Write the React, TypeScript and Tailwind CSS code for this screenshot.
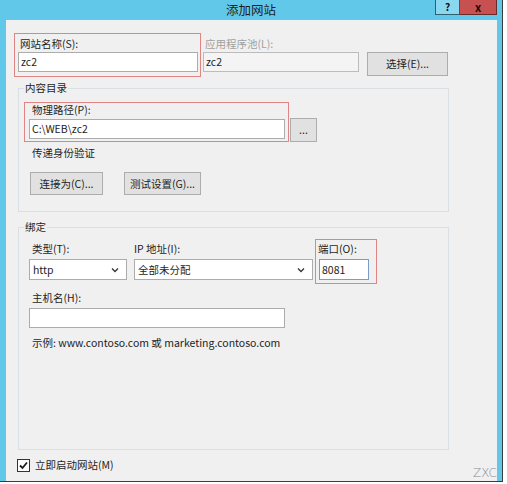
import React from "react";

const font = { fontFamily: '"Noto Sans CJK SC", "Noto Sans", sans-serif' };

function Chevron() {
  return (
    <svg width="8" height="6" viewBox="0 0 8 6" className="shrink-0">
      <polyline points="1,1.5 4,4.5 7,1.5" fill="none" stroke="#333" strokeWidth="1.3" />
    </svg>
  );
}

function Select({ value, w }: { value: string; w: string }) {
  return (
    <div
      className={`${w} mt-[3px] flex h-[21px] items-center justify-between border border-[#acacac] bg-white pl-[3px] pr-[7px]`}
    >
      <span className="leading-[14px]">{value}</span>
      <Chevron />
    </div>
  );
}

function Button({ label, w, h = "h-[23px]" }: { label: string; w: string; h?: string }) {
  return (
    <div
      className={`${w} ${h} flex items-center justify-center border border-[#adadad] bg-[#e1e1e1] leading-[14px]`}
    >
      {label}
    </div>
  );
}

export default function App() {
  return (
    <div className="h-[484px] w-[507px] overflow-hidden bg-white text-[10.5px] text-[#1e1e1e]" style={font}>
      <div className="flex h-[482px] w-[503px] flex-col border-b border-r border-[#3c3c3c] bg-[#62c8e9]">
        {/* title bar */}
        <div className="flex h-[20px] shrink-0 items-start">
          <div className="flex-1 pl-[67px] pt-[2px] text-center text-[12.5px] leading-[16px]">添加网站</div>
          <div className="flex h-[15px] w-[25px] shrink-0 items-center justify-center border-x border-b border-[#2f5f70] bg-[#8ad7f0]">
            <span className="text-[10px] font-bold leading-[10px] text-[#111]">?</span>
          </div>
          <div className="flex h-[15px] w-[37px] shrink-0 items-center justify-center border-b border-r border-[#6b2a2a] bg-[#c75050]">
            <span className="text-[11px] font-bold leading-[10px] text-[#111]">x</span>
          </div>
          <div className="w-[5px] shrink-0" />
        </div>

        {/* content */}
        <div className="relative ml-[6px] mr-[5px] flex-1 bg-[#f0f0f0]">
          {/* row 1 */}
          <div className="flex items-start pt-[13px]">
            <div className="ml-[8px] h-[44px] w-[187px] border border-[#e08585] pl-[3px] pt-[3px]">
              <div className="h-[14px] pl-[2px] leading-[14px]">网站名称(S):</div>
              <div className="mt-[1px] flex h-[20px] w-[180px] items-center border border-[#acacac] bg-white pl-[2px] leading-[14px]">
                zc2
              </div>
            </div>
            <div className="ml-[2px] pt-[4px]">
              <div className="h-[14px] pl-[2px] leading-[14px] text-[#a0a0a0]">应用程序池(L):</div>
              <div className="mt-[1px] flex h-[20px] w-[156px] items-center border border-[#bcbcbc] bg-[#f4f4f4] pl-[2px] leading-[14px]">
                zc2
              </div>
            </div>
            <div className="ml-[8px] mt-[19px]">
              <Button label="选择(E)..." w="w-[81px]" h="h-[24px]" />
            </div>
          </div>

          {/* 内容目录 */}
          <fieldset className="ml-[12px] mt-[4px] h-[131px] w-[431px] border border-[#d9dfe3]">
            <legend className="ml-[5px] px-[1px] leading-[14px]">内容目录</legend>
            <div className="flex items-start pt-[7px]">
              <div className="ml-[5px] h-[40px] w-[265px] border border-[#e08585] pl-[4px]">
                <div className="ml-[3px] h-[14px] leading-[14px]">物理路径(P):</div>
                <div className="mt-[2px] flex h-[20px] w-[256px] items-center border border-[#acacac] bg-white pl-[2px] leading-[14px]">
                  C:\WEB\zc2
                </div>
              </div>
              <div className="ml-[1px] mt-[16px]">
                <Button label="..." w="w-[27px]" h="h-[24px]" />
              </div>
            </div>
            <div className="ml-[13px] mt-[4px] h-[14px] leading-[14px]">传递身份验证</div>
            <div className="ml-[11px] mt-[12px] flex gap-[21px]">
              <Button label="连接为(C)..." w="w-[73px]" />
              <Button label="测试设置(G)..." w="w-[77px]" />
            </div>
          </fieldset>

          {/* 绑定 */}
          <fieldset className="ml-[12px] mt-[8px] h-[230px] w-[431px] border border-[#d9dfe3]">
            <legend className="ml-[5px] px-[1px] leading-[14px]">绑定</legend>
            <div className="flex items-start">
              <div className="ml-[10px] w-[98px] pt-[8px]">
                <div className="h-[14px] pl-[3px] leading-[14px]">类型(T):</div>
                <Select value="http" w="w-[98px]" />
              </div>
              <div className="ml-[7px] w-[179px] pt-[8px]">
                <div className="h-[14px] leading-[14px]">IP 地址(I):</div>
                <Select value="全部未分配" w="w-[179px]" />
              </div>
              <div className="ml-[2px] mt-[5px] h-[45px] w-[62px] border border-[#e08585] pt-[2px]">
                <div className="h-[14px] pl-[2px] leading-[14px]">端口(O):</div>
                <div className="ml-[3px] mt-[3px] flex h-[21px] w-[50px] items-center border border-[#7a9cc6] bg-white pl-[2px] leading-[14px]">
                  8081
                </div>
              </div>
            </div>
            <div className="ml-[13px] mt-[7px] h-[14px] leading-[14px]">主机名(H):</div>
            <div className="ml-[10px] mt-[3px] h-[20px] w-[256px] border border-[#acacac] bg-white" />
            <div className="ml-[13px] mt-[8px] h-[14px] leading-[14px]">
              示例: www.contoso.com 或 marketing.contoso.com
            </div>
          </fieldset>

          {/* checkbox */}
          <div className="ml-[11px] mt-[8px] flex items-center">
            <div className="flex h-[13px] w-[13px] items-center justify-center border border-[#333] bg-white">
              <svg width="9" height="9" viewBox="0 0 9 9">
                <polyline points="1,4.5 3.5,7 8,1.5" fill="none" stroke="#1e1e1e" strokeWidth="1.8" />
              </svg>
            </div>
            <span className="ml-[5px] leading-[14px]">立即启动网站(M)</span>
          </div>

          <div
            className="absolute bottom-[2px] right-0 text-[12px] font-light leading-[12px] text-[#8a8a8a]"
            style={{ fontFamily: '"DejaVu Sans", sans-serif' }}
          >
            ZXC
          </div>
        </div>
      </div>
    </div>
  );
}
